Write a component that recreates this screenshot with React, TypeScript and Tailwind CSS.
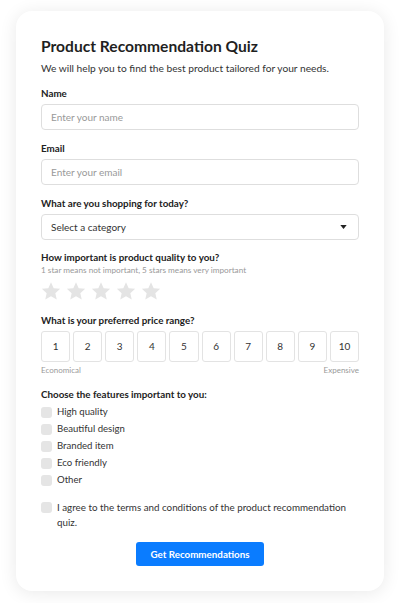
import React from 'react';

const features = ['High quality', 'Beautiful design', 'Branded item', 'Eco friendly', 'Other'];

const Star = () => (
  <svg width="20" height="20" viewBox="0 0 24 24" className="fill-[#e4e4e4]">
    <path d="M12 1.5l3.2 7.1 7.8.8-5.8 5.2 1.7 7.6L12 18.3l-6.9 3.9 1.7-7.6L1 9.4l7.8-.8z" />
  </svg>
);

const Label = ({ children }: { children: React.ReactNode }) => (
  <div className="text-[9.8px] leading-[16px] font-bold text-[#222]">{children}</div>
);

export default function App() {
  return (
    <div
      className="bg-white px-4 pt-[11px] pb-3"
      style={{ fontFamily: 'Lato, "Noto Sans", sans-serif' }}
    >
      <div className="rounded-2xl bg-white px-[25px] pt-6 pb-[25px] shadow-[0_2px_18px_rgba(0,0,0,0.09)]">
        <h1 className="text-[15.6px] leading-[22px] font-bold text-[#1f1f1f]">Product Recommendation Quiz</h1>
        <p className="mt-[2px] text-[10.2px] leading-[18px] text-[#333]">
          We will help you to find the best product tailored for your needs.
        </p>

        {/* 名前 */}
        <div className="mt-2">
          <Label>Name</Label>
          <input
            placeholder="Enter your name"
            className="mt-[3px] block h-[26px] w-full rounded border border-[#dedede] px-[9px] text-[10px] text-[#333] outline-none placeholder:text-[#999]"
          />
        </div>

        <div className="mt-[10px]">
          <Label>Email</Label>
          <input
            placeholder="Enter your email"
            className="mt-[3px] block h-[26px] w-full rounded border border-[#dedede] px-[9px] text-[10px] text-[#333] outline-none placeholder:text-[#999]"
          />
        </div>

        <div className="mt-[10px]">
          <Label>What are you shopping for today?</Label>
          <div className="mt-[3px] flex h-[26px] items-center justify-between rounded border border-[#dedede] pl-[9px] pr-[11px] text-[10px] text-[#333]">
            <span>Select a category</span>
            <svg width="7" height="4" viewBox="0 0 8 5" className="fill-[#222]">
              <path d="M0 0h8L4 5z" />
            </svg>
          </div>
        </div>

        <div className="mt-[10px]">
          <div className="text-[9.8px] leading-[14px] font-bold text-[#222]">How important is product quality to you?</div>
          <div className="text-[8.2px] leading-[12px] text-[#999]">1 star means not important, 5 stars means very important</div>
          <div className="mt-[5px] flex gap-[5px]">
            {[0, 1, 2, 3, 4].map((i) => (
              <Star key={i} />
            ))}
          </div>
        </div>

        <div className="mt-[11px]">
          <Label>What is your preferred price range?</Label>
          <div className="mt-[3px] grid grid-cols-10 gap-[3px]">
            {[1, 2, 3, 4, 5, 6, 7, 8, 9, 10].map((n) => (
              <div
                key={n}
                className="flex h-[31px] items-center justify-center rounded-[3px] border border-[#e3e3e3] text-[10px] text-[#333]"
              >
                {n}
              </div>
            ))}
          </div>
          <div className="mt-[2px] flex justify-between text-[8px] leading-[12px] text-[#999]">
            <span>Economical</span>
            <span>Expensive</span>
          </div>
        </div>

        <div className="mt-[10px]">
          <Label>Choose the features important to you:</Label>
          <div className="mt-[2px]">
            {features.map((f) => (
              <div key={f} className="flex h-[17px] items-center gap-[5px] text-[9.6px] text-[#333]">
                <span className="h-[11px] w-[11px] rounded-[3px] bg-[#e5e5e5]" />
                {f}
              </div>
            ))}
          </div>
        </div>

        <div className="mt-[11px] flex gap-[5px] text-[9.8px] leading-[15px] text-[#333]">
          <span className="mt-[2px] h-[11px] w-[11px] shrink-0 rounded-[3px] bg-[#e5e5e5]" />
          <span>I agree to the terms and conditions of the product recommendation quiz.</span>
        </div>

        <div className="mt-3 flex justify-center">
          <button className="h-6 w-[128px] rounded-[3px] bg-[#0a7cff] text-[9.8px] font-bold text-white">
            Get Recommendations
          </button>
        </div>
      </div>
    </div>
  );
}
